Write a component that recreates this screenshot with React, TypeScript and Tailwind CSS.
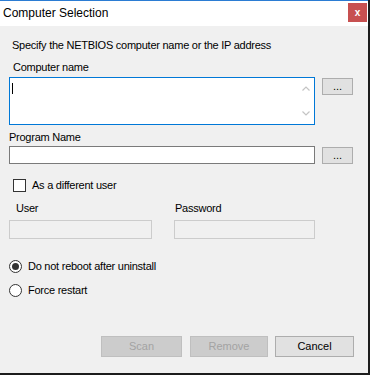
import React from 'react';

const font = { fontFamily: '"Liberation Sans", Arial, sans-serif' };

const DotsButton = () => (
  <button className="ml-[7px] mt-[1px] w-[31px] h-[17px] bg-[#e1e1e1] border border-[#adadad] text-[11px] leading-[11px] text-black flex items-end justify-center pb-[2px]">
    ...
  </button>
);

const Radio = ({ checked, label }: { checked?: boolean; label: string }) => (
  <label className="flex items-center h-[13px] pl-[9px]">
    <span className="w-[13px] h-[13px] rounded-full border border-[#333] bg-white flex items-center justify-center">
      {checked && <span className="w-[7px] h-[7px] rounded-full bg-[#333]" />}
    </span>
    <span className="ml-[6px] text-[11px] leading-[13px] tracking-[-0.25px] text-black">{label}</span>
  </label>
);

const App = () => {
  return (
    <div className="w-[370px] h-[375px] bg-[#1c1c1c]" style={font}>
      <div className="w-[368px] h-[373px] bg-[#f0f0f0] flex flex-col">
        {/* title bar */}
        <div className="h-[26px] bg-white border-t border-[#2b7cd3] flex items-start justify-between">
          <span className="pl-[3px] mt-[5px] text-[12px] leading-[15px] text-black">Computer Selection</span>
          <button className="mt-[2px] mr-[1px] w-[19px] h-[19px] bg-[#c75050] text-white text-[10px] font-bold leading-[19px] flex items-center justify-center">
            x
          </button>
        </div>

        <div className="text-[11px] leading-[13px] tracking-[-0.25px] text-black">
          <div className="mt-[13px] pl-[12px]">Specify the NETBIOS computer name or the IP address</div>
          <div className="mt-[9px] pl-[13px]">Computer name</div>
        </div>

        {/* computer name */}
        <div className="mt-[3px] flex items-start pl-[9px]">
          <div className="w-[306px] h-[48px] bg-white border border-[#0078d7] flex">
            <div className="flex-1 relative">
              <span className="absolute left-[2px] top-[5px] w-px h-[11px] bg-black" />
            </div>
            <div className="w-[17px] flex flex-col items-center justify-between py-[8px]">
              <svg width="8" height="5" viewBox="0 0 8 5">
                <path d="M0.5 4.5 L4 1 L7.5 4.5" fill="none" stroke="#c4c4c4" strokeWidth="1.2" />
              </svg>
              <svg width="8" height="5" viewBox="0 0 8 5">
                <path d="M0.5 0.5 L4 4 L7.5 0.5" fill="none" stroke="#c4c4c4" strokeWidth="1.2" />
              </svg>
            </div>
          </div>
          <DotsButton />
        </div>

        <div className="mt-[6px] pl-[9px] text-[11px] leading-[13px] tracking-[-0.25px] text-black">Program Name</div>

        {/* program name */}
        <div className="mt-[2px] flex items-start pl-[9px]">
          <div className="w-[306px] h-[18px] bg-white border border-[#7a7a7a]" />
          <DotsButton />
        </div>

        {/* different user */}
        <label className="mt-[15px] pl-[13px] flex items-center h-[13px]">
          <span className="w-[13px] h-[13px] border border-[#333] bg-white" />
          <span className="ml-[6px] text-[11px] leading-[13px] tracking-[-0.25px] text-black">As a different user</span>
        </label>

        <div className="mt-[10px] flex text-[11px] leading-[13px] tracking-[-0.25px] text-black">
          <span className="pl-[16px] w-[175px]">User</span>
          <span>Password</span>
        </div>

        <div className="mt-[5px] flex pl-[9px]">
          <div className="w-[143px] h-[19px] bg-[#f0f0f0] border border-[#cccccc]" />
          <div className="ml-[22px] w-[141px] h-[19px] bg-[#f0f0f0] border border-[#cccccc]" />
        </div>

        <div className="mt-[21px] flex flex-col gap-[11px]">
          <Radio checked label="Do not reboot after uninstall" />
          <Radio label="Force restart" />
        </div>

        {/* buttons */}
        <div className="mt-auto mb-[16px] flex justify-end pr-[14px] text-[11px] leading-[13px]">
          <button className="w-[81px] h-[21px] bg-[#cccccc] border border-[#bfbfbf] text-[#a3a3a3]">Scan</button>
          <button className="ml-[8px] w-[78px] h-[21px] bg-[#cccccc] border border-[#bfbfbf] text-[#a3a3a3]">Remove</button>
          <button className="ml-[7px] w-[79px] h-[21px] bg-[#e1e1e1] border border-[#adadad] text-black">Cancel</button>
        </div>
      </div>
    </div>
  );
};

export default App;
